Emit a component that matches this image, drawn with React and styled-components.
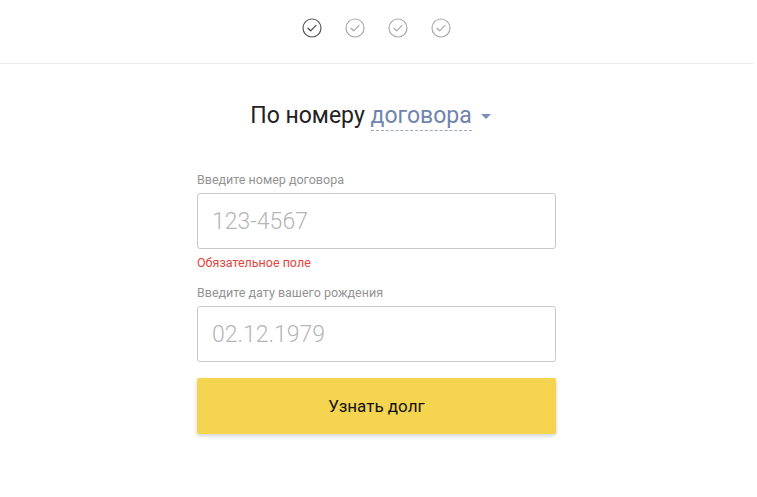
import React from 'react';
import styled, {createGlobalStyle} from 'styled-components';

const GlobalStyle = createGlobalStyle`
  html, body {
    margin: 0;
    padding: 0;
    background: #fff;
    font-family: Roboto, "Noto Sans", sans-serif;
  }
`;

const steps = [true, false, false, false];

const CheckIcon = ({active}) => (
  <svg width="20" height="20" viewBox="0 0 20 20">
    <circle cx="10" cy="10" r="9" fill="none" stroke={active ? '#555' : '#aaa'} strokeWidth="1.2"/>
    <path d="M6 10.2 L8.7 12.8 L14 7.4" fill="none" stroke={active ? '#444' : '#aaa'} strokeWidth="1.2" strokeLinecap="round" strokeLinejoin="round"/>
  </svg>
);

export default function App() {
  return (
    <Page>
      <GlobalStyle/>
      <Header>
        <Steps>
          {steps.map((a, i) => <Step key={i}><CheckIcon active={a}/></Step>)}
        </Steps>
      </Header>
      <Title>
        По номеру <Switch>договора</Switch>
        <Caret/>
      </Title>
      <Form>
        <Label>Введите номер договора</Label>
        <Input placeholder="123-4567"/>
        <Error>Обязательное поле</Error>
        <Label>Введите дату вашего рождения</Label>
        <Input placeholder="02.12.1979"/>
        <Button>Узнать долг</Button>
      </Form>
    </Page>
  );
}

//Style

const Page = styled.div`
  width: 757px;
  height: 497px;
  overflow: hidden;
`;

const Header = styled.div`
  width: 753px;
  height: 64px;
  border-bottom: 1px solid #ececec;
  display: flex;
  justify-content: center;
  box-sizing: border-box;
  padding-top: 18px;
`;

const Steps = styled.div`
  display: flex;
  gap: 23px;
  margin-left: -1px;
`;

const Step = styled.div`
  width: 20px;
  height: 20px;
`;

const Title = styled.h1`
  margin: 37px 0 0;
  text-align: center;
  font-size: 23px;
  font-weight: 400;
  color: #222;
  line-height: 30px;
  padding-right: 16px;
`;

const Switch = styled.span`
  color: #6f84ad;
  border-bottom: 1px dashed #9aa8c4;
  padding-bottom: 1px;
`;

const Caret = styled.span`
  display: inline-block;
  width: 0;
  height: 0;
  margin-left: 9px;
  vertical-align: middle;
  border-left: 5px solid transparent;
  border-right: 5px solid transparent;
  border-top: 5px solid #7d8fb3;
`;

const Form = styled.div`
  width: 359px;
  margin: 41px auto 0;
  padding-right: 4px;
  display: flex;
  flex-direction: column;
`;

const Label = styled.div`
  font-size: 12.5px;
  color: #939393;
  line-height: 16px;
  margin-bottom: 5px;
`;

const Input = styled.input`
  box-sizing: border-box;
  width: 100%;
  height: 56px;
  border: 1px solid #c9c9c9;
  border-radius: 3px;
  padding: 0 14px;
  font-family: Roboto, sans-serif;
  font-size: 23px;
  font-weight: 300;
  color: #333;
  outline: none;
  margin-bottom: 6px;
  &::placeholder {
    color: #b5b5b5;
  }
`;

const Error = styled.div`
  font-size: 12.5px;
  color: #e2453c;
  line-height: 16px;
  margin-bottom: 14px;
`;

const Button = styled.button`
  margin-top: 10px;
  height: 56px;
  width: 100%;
  border: none;
  border-radius: 2px;
  background: #f5d44f;
  box-shadow: 0 2px 4px rgba(0, 0, 0, 0.18);
  font-family: Roboto, sans-serif;
  font-size: 17px;
  color: #111;
  cursor: pointer;
`;
